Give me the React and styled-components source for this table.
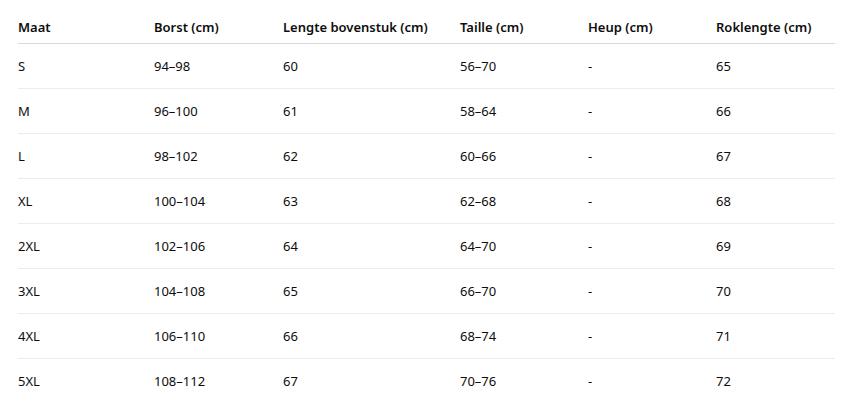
import React from 'react';
import styled, { createGlobalStyle } from 'styled-components';

const GlobalStyle = createGlobalStyle`
  html, body {
    margin: 0;
    padding: 0;
    background: #ffffff;
  }
  body {
    font-family: "Segoe UI", "Noto Sans", "Liberation Sans", sans-serif;
    color: #0d0d0d;
    -webkit-font-smoothing: antialiased;
  }
`;

const Page = styled.div`
  padding: 17px 0 0 18px;
`;

const Table = styled.table`
  width: 817px;
  border-collapse: collapse;
  table-layout: fixed;
  font-size: 13px;
`;

const HeadCell = styled.th`
  text-align: left;
  font-weight: 600;
  line-height: 20px;
  padding: 0 0 6px 0;
  border-bottom: 1px solid #d9d9d9;
  white-space: nowrap;
`;

const Row = styled.tr`
  border-bottom: 1px solid ${(p) => (p.$last ? 'transparent' : '#ececec')};
`;

const Cell = styled.td`
  text-align: left;
  font-weight: 400;
  line-height: 20px;
  padding: 12px 0;
`;

const columns = [
  { label: 'Maat', width: 136 },
  { label: 'Borst (cm)', width: 129 },
  { label: 'Lengte bovenstuk (cm)', width: 177 },
  { label: 'Taille (cm)', width: 128 },
  { label: 'Heup (cm)', width: 128 },
  { label: 'Roklengte (cm)', width: 119 },
];

const sizes = [
  ['S', '94–98', '60', '56–70', '-', '65'],
  ['M', '96–100', '61', '58–64', '-', '66'],
  ['L', '98–102', '62', '60–66', '-', '67'],
  ['XL', '100–104', '63', '62–68', '-', '68'],
  ['2XL', '102–106', '64', '64–70', '-', '69'],
  ['3XL', '104–108', '65', '66–70', '-', '70'],
  ['4XL', '106–110', '66', '68–74', '-', '71'],
  ['5XL', '108–112', '67', '70–76', '-', '72'],
];

const App = () => (
  <>
    <GlobalStyle />
    <Page>
      <Table>
        <colgroup>
          {columns.map((c) => <col key={c.label} style={{ width: c.width }} />)}
        </colgroup>
        <thead>
          <tr>
            {columns.map((c) => <HeadCell key={c.label}>{c.label}</HeadCell>)}
          </tr>
        </thead>
        <tbody>
          {sizes.map((row, idx) => (
            <Row key={row[0]} $last={idx === sizes.length - 1}>
              {row.map((v, i) => <Cell key={i}>{v}</Cell>)}
            </Row>
          ))}
        </tbody>
      </Table>
    </Page>
  </>
);

export default App;
